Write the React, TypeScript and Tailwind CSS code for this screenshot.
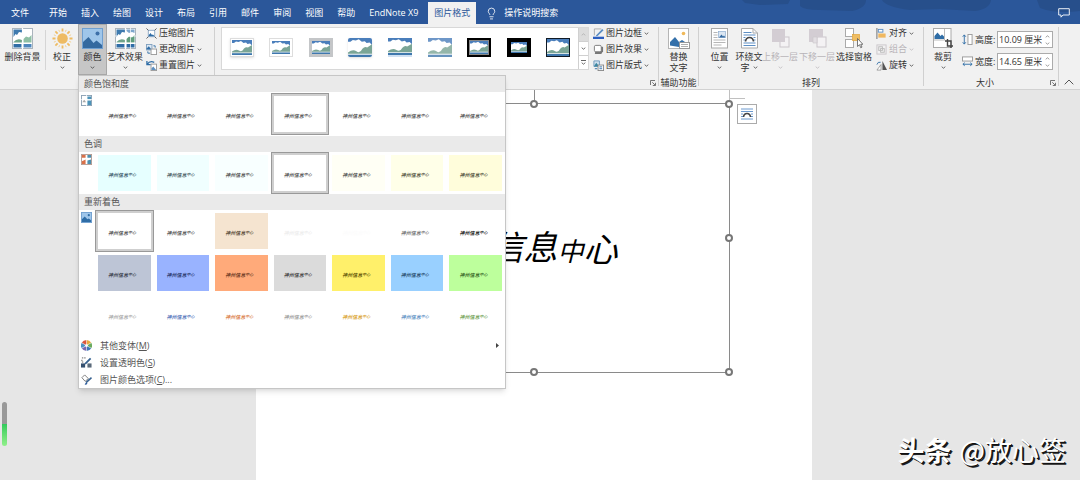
import clsx from 'clsx'
import { Lightbulb } from 'lucide-react'
import type { ReactNode } from 'react'

const TABS = ['开始', '插入', '绘图', '设计', '布局', '引用', '邮件', '审阅', '视图', '帮助', 'EndNote X9']

interface Swatch {
  bg: string
  ink: string
  selected?: boolean
}

const SATURATION: Swatch[] = [
  { bg: 'bg-white', ink: 'text-[#444444]' },
  { bg: 'bg-white', ink: 'text-[#444444]' },
  { bg: 'bg-white', ink: 'text-[#444444]' },
  { bg: 'bg-white', ink: 'text-[#444444]', selected: true },
  { bg: 'bg-white', ink: 'text-[#444444]' },
  { bg: 'bg-white', ink: 'text-[#444444]' },
  { bg: 'bg-white', ink: 'text-[#444444]' }
]

const TONE: Swatch[] = [
  { bg: 'bg-[#e6ffff]', ink: 'text-[#2f4f5f]' },
  { bg: 'bg-[#f0ffff]', ink: 'text-[#3a4f56]' },
  { bg: 'bg-[#f8ffff]', ink: 'text-[#444444]' },
  { bg: 'bg-white', ink: 'text-[#444444]', selected: true },
  { bg: 'bg-[#fffff5]', ink: 'text-[#444444]' },
  { bg: 'bg-[#ffffe8]', ink: 'text-[#44442f]' },
  { bg: 'bg-[#fffddb]', ink: 'text-[#44442f]' }
]

const RECOLOR: Swatch[] = [
  { bg: 'bg-white', ink: 'text-[#444444]', selected: true },
  { bg: 'bg-white', ink: 'text-[#444444]' },
  { bg: 'bg-[#f5e4d0]', ink: 'text-[#4a3a2a]' },
  { bg: 'bg-white', ink: 'text-[#ececec]' },
  { bg: 'bg-white', ink: 'text-[#fcfcfc]' },
  { bg: 'bg-white', ink: 'text-[#666666]' },
  { bg: 'bg-white', ink: 'text-black font-bold' },
  { bg: 'bg-[#bdc5d6]', ink: 'text-[#2c3240]' },
  { bg: 'bg-[#99b3ff]', ink: 'text-[#1c2c60]' },
  { bg: 'bg-[#ffaa7a]', ink: 'text-[#60301a]' },
  { bg: 'bg-[#dbdbdb]', ink: 'text-[#333333]' },
  { bg: 'bg-[#fff06a]', ink: 'text-[#564a00]' },
  { bg: 'bg-[#99d0ff]', ink: 'text-[#1a4060]' },
  { bg: 'bg-[#bdff9c]', ink: 'text-[#2d5a1a]' },
  { bg: 'bg-white', ink: 'text-[#a5a5a5]' },
  { bg: 'bg-white', ink: 'text-[#4568b5]' },
  { bg: 'bg-white', ink: 'text-[#d87338]' },
  { bg: 'bg-white', ink: 'text-[#959595]' },
  { bg: 'bg-white', ink: 'text-[#d89c20]' },
  { bg: 'bg-white', ink: 'text-[#4f88c0]' },
  { bg: 'bg-white', ink: 'text-[#689a48]' }
]

const Chevron = ({ className }: { className?: string }) => (
  <svg viewBox="0 0 5 3" className={clsx('h-[3px] w-[5px] shrink-0', className)}>
    <path d="M.7 .7 2.5 2.200 4.300 .7" fill="none" stroke="currentColor" strokeWidth=".7" />
  </svg>
)

const Launcher = () => (
  <button type="button" aria-label="更多选项" className="absolute right-[2px] bottom-[3px] text-[#666666]">
    <svg viewBox="0 0 6 6" className="size-[6px]" fill="none" stroke="currentColor" strokeWidth=".9">
      <path d="M.5 5V.5H5M2.3 2.3l3 3M5.5 2.8v2.7H2.8" />
    </svg>
  </button>
)

const Scene = ({ className }: { className?: string }) => (
  <svg viewBox="0 0 20 15" preserveAspectRatio="none" className={className}>
    <rect width="20" height="15" fill="#fff" />
    <path d="M0 0H20V5.500L18 3.500 15.500 4 14 2.500 11.500 3 9 1 6.500 2 4 1.500 2 3 0 3Z" fill="#4a7ebb" />
    <path d="M0 11.500Q4 8.500 7 10.500T12 8.500Q14 6.500 16 7.500L20 5V12.500H0Z" fill="#7aa596" />
    <rect y="13.200" width="20" height="1.800" fill="#3f78ad" />
  </svg>
)

const PhotoIcon = () => (
  <svg viewBox="0 0 21 21" className="size-[21px]">
    <rect x=".5" y=".5" width="20" height="20" fill="#9fc6ea" stroke="#6f9fd0" />
    <path d="M1 20V14L6.500 9l5 6 3-2.500 5.500 4.500v3Z" fill="#34699f" />
    <circle cx="15.500" cy="5.500" r="2" fill="#3d6fa8" />
  </svg>
)

const SplitIcon = ({ art }: { art?: boolean }) => (
  <svg viewBox="0 0 21 21" className="size-[21px]">
    <rect x=".5" y=".5" width="20" height="20" fill="#fff" stroke="#aab4bd" />
    <path d="M1.500 1.500H10V4.500L7 4 5 7 3.500 6 1.500 9Z" fill="#3f7aae" />
    <path d="M1.500 14Q5 10 10 12V14.500H1.500Z" fill="#6fa58b" />
    <path d="M1.500 16H9.500V19.500H1.500Z" fill="#2f6da6" />
    <path d="M11.500 11 14 8.500 17 9.500 19.500 7V14.500H11.500Z" fill={art ? '#5f9d7c' : '#8fc0a5'} />
    <path d="M11.500 16H19.500V19.500H11.500Z" fill={art ? '#2f6da6' : '#4d86bd'} />
    {art && <path d="M11.500 1.500H19.500V5L17 4 14 5 11.500 3Z" fill="#7da6cc" />}
    <path d="M10.500 0V21" stroke="#fff" strokeWidth="1.200" />
    {art && <path d="M0 8H21M0 15.200H21M15.500 0V21" stroke="#fff" strokeWidth=".7" />}
  </svg>
)

const SunIcon = () => (
  <svg viewBox="0 0 21 21" className="size-[21px]">
    <circle cx="10.500" cy="10.500" r="5.300" fill="#eebb63" />
    <path
      d="M10.500 .5v3M10.500 17.500v3M.5 10.500h3M17.500 10.500h3M3.400 3.400l2.200 2.200M15.400 15.400l2.200 2.200M3.400 17.600l2.200-2.200M15.400 5.600l2.200-2.200"
      stroke="#eebb63"
      strokeWidth="1.800"
    />
    <path
      d="M6.800 1.900l.8 1.800M13.400 17.300l.8 1.800M1.900 14.200l1.800-.8M17.300 7.600l1.800-.8M1.900 6.800l1.800.8M17.300 13.400l1.800.8M6.800 19.100l.8-1.800M13.400 3.700l.8-1.800"
      stroke="#f3d08f"
    />
  </svg>
)

const AltTextIcon = () => (
  <svg viewBox="0 0 22 22" className="size-[22px]">
    <rect x=".5" y=".5" width="20" height="20" fill="#fff" stroke="#b5b5b5" />
    <circle cx="15.500" cy="5.500" r="1.800" fill="#f0b95a" />
    <path d="M2 17.500V14L7 9l4 5 3-2 3 2H11v5Z" fill="#3470aa" />
    <rect x="11.500" y="14.500" width="10" height="6" fill="#fff" stroke="#999" />
    <path d="M13 16.500h7M13 18.500h7" stroke="#9a9a9a" strokeWidth=".8" />
  </svg>
)

const PositionIcon = () => (
  <svg viewBox="0 0 17 21" className="h-[21px] w-[17px]">
    <rect x=".5" y=".5" width="16" height="19.500" fill="#fff" stroke="#a9a9a9" />
    <path d="M2.500 4.500h4M2.500 7h4M2.500 9.500h4M2.500 12h12M2.500 14.500h12M2.500 17h8" stroke="#a5a5a5" strokeWidth=".8" />
    <rect x="7.500" y="3.500" width="7" height="6" fill="#dbe6f2" stroke="#8faed0" strokeWidth=".7" />
    <path d="M8 9.500l2.500-3 1.500 2 1-1 1.500 2Z" fill="#34699f" />
  </svg>
)

const WrapIcon = () => (
  <svg viewBox="0 0 17 21" className="h-[21px] w-[17px]">
    <path d="M.5 .5H12L16.500 5V20H.5Z" fill="#fff" stroke="#a9a9a9" />
    <path d="M12 .5V5h4.500" fill="none" stroke="#a9a9a9" />
    <path d="M2.500 4.500h8M2.500 7h12M2.500 9.500h2M12.500 9.500h2M2.500 12h1.500M13 12h1.500M2.500 15h12M2.500 17.500h12" stroke="#4b82bd" strokeWidth=".9" />
    <path d="M4.500 13.500Q5 9.500 8.500 9.500T12.500 13.500" fill="none" stroke="#444" strokeWidth="1.700" />
  </svg>
)

const LayerIcon = ({ back }: { back?: boolean }) => (
  <svg viewBox="0 0 19 21" className="h-[21px] w-[19px]">
    <rect x="9" y="9" width="9" height="10" fill="#f4f2f4" stroke="#cbc6cb" />
    <path d={back ? 'M1 1H15V9H9V14H1Z' : 'M1 1H14V14H1Z'} fill="#d3cdd3" />
    {back && <path d="M5 9h4v6H5Z" fill="#e3dfe3" stroke="#cbc6cb" strokeWidth=".6" />}
  </svg>
)

const SelectionPaneIcon = () => (
  <svg viewBox="0 0 18 21" className="h-[21px] w-[18px]">
    <rect x=".5" y=".5" width="8" height="8" fill="#fff" stroke="#aaa" />
    <rect x=".5" y="11.500" width="8" height="8" fill="#fff" stroke="#aaa" />
    <rect x="7.500" y="6.500" width="7" height="6" fill="#efbd62" stroke="#e2a53d" strokeWidth=".7" />
    <path d="M12.500 10.500v8l2-1.800 1.200 3 1.300-.6-1.300-2.800h2.200Z" fill="#fff" stroke="#555" strokeWidth=".8" />
  </svg>
)

const CropIcon = () => (
  <svg viewBox="0 0 20 21" className="h-[21px] w-[20px]">
    <rect x=".5" y=".5" width="17.500" height="19" fill="#fff" stroke="#aaa" />
    <path d="M11.500 .5V12M.5 12H12" stroke="#aaa" strokeWidth=".8" />
    <path d="M1.500 11V8L4.500 4.500l3 3.500 1.500-1.500 2 2V11Z" fill="#2f6da6" />
    <path d="M14.500 11v7H20M12 13h6v7" fill="none" stroke="#444" strokeWidth="1.400" />
  </svg>
)

const SMALL_ICONS: Record<string, ReactNode> = {
  compress: (
    <>
      <rect x="2.500" y="2.500" width="7" height="7" fill="#fff" stroke="#8aa8c6" />
      <path d="M3 9V7.500L5 5.500l1.500 2L7.500 7 9 8.500V9Z" fill="#2f6da6" />
      <path d="M.5 .5l2 2M11.500 .5l-2 2M.5 11.500l2-2M11.500 11.500l-2-2" stroke="#555" />
    </>
  ),
  change: (
    <>
      <rect x=".5" y=".5" width="6" height="6" fill="#dce8f3" stroke="#7f9fbe" />
      <path d="M1 6V4.500L3 2.500 6 6Z" fill="#2f6da6" />
      <rect x="5.500" y="5.500" width="6" height="6" fill="#fff" stroke="#999" />
      <path d="M2 8v2h2.500M8 2h2v2" fill="none" stroke="#2f6da6" />
    </>
  ),
  reset: (
    <>
      <rect x="5.500" y="4.500" width="6" height="7" fill="#fff" stroke="#999" />
      <path d="M6 11V9l2-2 3 4Z" fill="#5d8fc0" />
      <path d="M1 1v4h4M1.500 4.500Q4 .5 9 2.500" fill="none" stroke="#2f6da6" strokeWidth="1.400" />
    </>
  ),
  border: (
    <>
      <path d="M9 1H1.500V8" fill="none" stroke="#aaa" />
      <path d="M3.500 8 10 1l1.500 1.500L5 8.800 3 9Z" fill="#5a8dc2" />
      <rect y="9.500" width="12" height="2.500" fill="#2c5fc0" />
    </>
  ),
  effect: (
    <>
      <path d="M3 4 11 3v5L9 11H2Z" fill="#777" />
      <rect x="1.500" y="1.500" width="7.500" height="7" rx="1.500" fill="#fff" stroke="#777" />
    </>
  ),
  layout: (
    <>
      <path d="M1 1h6v6H1Z" fill="#cfe0ee" stroke="#6f98bd" />
      <path d="M1 7l2.500-4L7 7Z" fill="#3a86a0" />
      <rect x="5.500" y="5.500" width="6" height="6" fill="#fff" stroke="#888" />
      <path d="M7 7.500h3M7 9.500h3M2 9.500h2.500" stroke="#2f6da6" />
    </>
  ),
  align: (
    <>
      <path d="M1 0v12" stroke="#666" />
      <rect x="2.500" y="1.500" width="5" height="3" fill="#fff" stroke="#5a8dc2" />
      <rect x="2.500" y="6" width="8" height="4.500" fill="#efb860" />
    </>
  ),
  group: (
    <>
      <rect x="1" y="1" width="10" height="10" fill="none" stroke="#c9c5c9" />
      <rect x="3" y="3" width="4" height="4" fill="none" stroke="#bbb" />
      <rect x="5" y="5" width="4" height="4" fill="none" stroke="#bbb" />
    </>
  ),
  rotate: (
    <>
      <path d="M7 1v10h5Z" fill="#555" />
      <path d="M5.500 5v6H1Z" fill="#fff" stroke="#888" strokeWidth=".8" />
      <path d="M1 5Q2 1.500 5 2.500" fill="none" stroke="#2f6da6" />
    </>
  ),
  height: (
    <>
      <path d="M2.500 1v10M.8 3l1.700-2 1.700 2M.8 9l1.700 2 1.700-2" fill="none" stroke="#2f6da6" />
      <rect x="6.500" y=".5" width="4.500" height="11" fill="#fff" stroke="#999" />
    </>
  ),
  width: (
    <>
      <rect x=".5" y="1" width="11" height="4.500" fill="#fff" stroke="#999" />
      <path d="M1 9h10M3 7.300 1 9l2 1.700M9 7.300 11 9 9 10.700" fill="none" stroke="#2f6da6" />
    </>
  ),
  saturation: (
    <>
      <rect x=".5" y=".5" width="11" height="11" fill="#fff" stroke="#8aa0b3" />
      <path d="M1.500 8l2-3 2 3Z" fill="#aaa" />
      <path d="M7 1.500h4v3H7ZM7 6h4v5H7Z" fill="#4c93b8" />
      <path d="M6 0v12M0 5h12" stroke="#fff" strokeWidth=".8" />
    </>
  ),
  tone: (
    <>
      <rect x=".5" y=".5" width="11" height="11" fill="#fff" stroke="#b59a90" />
      <path d="M1 1h4v3H1ZM1 8l4-2v5H1Z" fill="#d9714a" />
      <path d="M7 1h4v3H7ZM7 7l4-1v5H7Z" fill="#4c8fae" />
    </>
  ),
  recolor: (
    <>
      <rect x=".5" y=".5" width="11" height="11" fill="#9fc6ea" stroke="#6f9fd0" />
      <path d="M1 11V8l3-3 3 3 1.500-1L11 9v2Z" fill="#2f6da6" />
      <circle cx="8.500" cy="3.500" r="1.200" fill="#2f6da6" />
    </>
  ),
  variants: (
    <>
      <path d="M6 6V0A6 6 0 0 1 11.200 3Z" fill="#e9a93c" />
      <path d="M6 6 11.200 3A6 6 0 0 1 11.200 9Z" fill="#6bab5c" />
      <path d="M6 6 11.200 9A6 6 0 0 1 6 12Z" fill="#3c78b8" />
      <path d="M6 6V12A6 6 0 0 1 .8 9Z" fill="#7b68b0" />
      <path d="M6 6 .8 9A6 6 0 0 1 .8 3Z" fill="#4a90c4" />
      <path d="M6 6 .8 3A6 6 0 0 1 6 0Z" fill="#d9553f" />
      <path d="M6 0V12M.8 3 11.200 9M.8 9 11.200 3" stroke="#fff" strokeWidth=".5" />
      <circle cx="6" cy="6" r="1.500" fill="#fff" />
    </>
  ),
  transparent: (
    <>
      <path d="M1 1h4M1 3v2.500h2" fill="none" stroke="#555" strokeDasharray="1.500 1" />
      <path d="M4.500 7.500 10.500 1.500" stroke="#35608f" strokeWidth="2" />
      <rect x="0" y="7" width="4.500" height="4.500" fill="#35506f" />
      <rect x="7" y="7" width="4.500" height="4.500" fill="#5a6a7a" />
    </>
  ),
  options: (
    <>
      <path d="M1 4l3-3 4 4-3.500 3Z" fill="#fff" stroke="#777" />
      <path d="M5.500 9.500 11.500 4" stroke="#35608f" strokeWidth="1.800" />
      <path d="M4 11.500q1-3 3-1.500 0 2-3 1.500Z" fill="#2f5f9f" />
    </>
  )
}

const SmallIcon = ({ name }: { name: string }) => (
  <svg viewBox="0 0 12 12" className="size-[11px] shrink-0">
    {SMALL_ICONS[name]}
  </svg>
)

interface BigButtonProps {
  icon: ReactNode
  label: string
  width: string
  second?: string
  arrow?: boolean
  disabled?: boolean
  active?: boolean
}

const BigButton = ({ icon, label, width, second, arrow, disabled, active }: BigButtonProps) => (
  <button
    type="button"
    disabled={disabled}
    className={clsx(
      'flex h-[51px] shrink-0 flex-col items-center pt-1 whitespace-nowrap',
      width,
      disabled && 'text-[#b8b4b8]',
      active && 'bg-[#c6c6c6] outline outline-1 -outline-offset-1 outline-[#a8a8a8]'
    )}
  >
    <span className="flex h-[23px] items-start justify-center">{icon}</span>
    <span className="leading-[11px]">{label}</span>
    <span className="flex h-[11px] items-center gap-[3px] leading-[11px]">
      {second}
      {arrow && <Chevron />}
    </span>
  </button>
)

interface SmallButtonProps {
  icon: string
  label: string
  arrow?: boolean
  disabled?: boolean
}

const SmallButton = ({ icon, label, arrow, disabled }: SmallButtonProps) => (
  <button
    type="button"
    disabled={disabled}
    className={clsx('flex h-4 items-center gap-[2px] whitespace-nowrap', disabled && 'text-[#b8b4b8]')}
  >
    <SmallIcon name={icon} />
    <span>{label}</span>
    {arrow && <Chevron />}
  </button>
)

interface GroupProps {
  label?: string
  launcher?: boolean
  className?: string
  children: ReactNode
}

const Group = ({ label, launcher, className, children }: GroupProps) => (
  <div className="relative flex shrink-0 flex-col">
    <div className={clsx('flex h-[52px]', className)}>{children}</div>
    <div className={clsx('flex h-[13px] items-center justify-center', launcher && 'pr-3')}>{label}</div>
    {launcher && <Launcher />}
  </div>
)

const Divider = () => <div className="my-[3px] w-px shrink-0 bg-[#d0d0d0]" />

const SizeField = ({ id, icon, label, value }: { id: string; icon: string; label: string; value: string }) => (
  <div className="flex items-center">
    <SmallIcon name={icon} />
    <label htmlFor={id} className="w-[24px] pl-[2px] whitespace-nowrap">
      {label}
    </label>
    <div className="flex h-[17px] w-[56px] items-center border border-[#ababab] bg-white">
      <input id={id} defaultValue={value} className="w-full min-w-0 pl-[1px] text-[9px] text-[#333333] outline-none" />
      <div className="flex w-[10px] shrink-0 flex-col items-center gap-1 text-[#777777]">
        <button type="button" aria-label={`增加${label}`} className="flex">
          <Chevron className="rotate-180" />
        </button>
        <button type="button" aria-label={`减少${label}`} className="flex">
          <Chevron />
        </button>
      </div>
    </div>
  </div>
)

const GALLERY = [
  'border border-[#dddddd] bg-white p-px shadow-sm',
  'border border-[#dddddd] bg-white p-[2px]',
  'bg-[#c4c6c8] p-[3px]',
  'overflow-hidden rounded-[2px] shadow',
  'border-b-2 border-[#cfe0f2]',
  'opacity-80',
  'border-2 border-black bg-[#888888] p-px',
  'border-4 border-black',
  'border border-[#101a26]'
]

const Section = ({ title, icon, swatches, className }: { title: string; icon: string; swatches: Swatch[]; className?: string }) => (
  <section>
    <h3 className="h-4 bg-[#eaeaea] pl-[5px] leading-4">{title}</h3>
    <div className={clsx('flex', className)}>
      <div className="w-[16px] shrink-0 pt-[2px] pl-[2px]">
        <SmallIcon name={icon} />
      </div>
      <div className="grid flex-1 grid-cols-7">
        {swatches.map((swatch, i) => (
          <button
            key={i}
            type="button"
            aria-label={`${title} ${i + 1}`}
            className={clsx(
              'h-[42px]',
              swatch.selected ? 'border border-[#999999] bg-[#cfcfcf] p-[2px]' : 'p-[3px]'
            )}
          >
            <span
              className={clsx(
                'flex h-full items-center pt-[3px] pl-[10px] font-medium whitespace-nowrap italic',
                swatch.bg,
                swatch.ink
              )}
            >
              <span className="text-[5px]">神州信息</span>
              <span className="text-[4px]">中心</span>
            </span>
          </button>
        ))}
      </div>
    </div>
  </section>
)

const MenuItem = ({ icon, label, hotkey, more, submenu }: { icon: string; label: string; hotkey: string; more?: boolean; submenu?: boolean }) => (
  <button type="button" className="flex h-[17px] w-full items-center pr-[6px] pl-[2px] text-left">
    <SmallIcon name={icon} />
    <span className="ml-[8px] flex-1">
      {label}(<u>{hotkey}</u>){more && '...'}
    </span>
    {submenu && (
      <svg viewBox="0 0 3 5" className="h-[5px] w-[3px]">
        <path d="M0 0 3 2.500 0 5Z" fill="#444" />
      </svg>
    )}
  </button>
)

const ColorMenu = () => (
  <div className="absolute top-[51px] left-0 z-10 w-[428px] border border-[#c6c6c6] bg-white text-[#555555] shadow-md">
    <Section title="颜色饱和度" icon="saturation" swatches={SATURATION} className="py-px" />
    <Section title="色调" icon="tone" swatches={TONE} />
    <Section title="重新着色" icon="recolor" swatches={RECOLOR} className="pb-px" />
    <MenuItem icon="variants" label="其他变体" hotkey="M" submenu />
    <MenuItem icon="transparent" label="设置透明色" hotkey="S" />
    <MenuItem icon="options" label="图片颜色选项" hotkey="C" more />
  </div>
)

const TitleBar = () => (
  <header className="relative flex h-6 shrink-0 items-stretch bg-[#2b579a] text-white">
    <svg viewBox="0 0 340 24" className="absolute top-0 right-0 h-6 w-[340px]" fill="#274f8b">
      <path d="M2 0H50L48 4 20 5 5 3Z" />
      <path d="M60 0H126Q126 8 112 11L80 10Q64 10 60 6Z" />
      <path d="M142 0H251Q250 9 235 11L200 9 170 10Q146 7 142 0Z" />
      <path d="M297 0H340V11Q315 14 300 8Z" />
    </svg>
    <nav className="flex items-stretch">
      <button type="button" className="mr-[2px] px-[11px] pt-[2px]">
        文件
      </button>
      {TABS.map((tab) => (
        <button key={tab} type="button" className="px-[7px] pt-[2px] whitespace-nowrap">
          {tab}
        </button>
      ))}
      <button type="button" className="mt-[2px] ml-[3px] bg-[#f1f1f1] px-[6px] whitespace-nowrap text-[#2b579a]">
        图片格式
      </button>
    </nav>
    <button type="button" className="ml-[9px] flex items-center gap-[6px] pt-[2px] whitespace-nowrap">
      <Lightbulb size={13} strokeWidth={1.5} />
      操作说明搜索
    </button>
    <button type="button" aria-label="批注" className="relative mr-[10px] ml-auto pt-[2px]">
      <svg viewBox="0 0 12 10" className="h-[10px] w-[12px]" fill="none" stroke="#fff" strokeWidth=".9">
        <path d="M.7 .7H11.300V7H5L3 9.200V7H.7Z" />
      </svg>
    </button>
  </header>
)

const Ribbon = () => (
  <div className="relative z-10 flex h-[66px] shrink-0 border-b border-[#d2d2d2] bg-[#f1f1f1] text-[#333333]">
    <Group>
      <BigButton icon={<SplitIcon />} label="删除背景" width="w-[45px]" />
      <div className="my-[6px] w-px bg-[#d5d5d5]" />
      <BigButton icon={<SunIcon />} label="校正" width="w-[32px]" arrow />
      <div className="relative">
        <BigButton icon={<PhotoIcon />} label="颜色" width="w-[29px]" arrow active />
        <ColorMenu />
      </div>
      <BigButton icon={<SplitIcon art />} label="艺术效果" width="w-[36px]" arrow />
      <div className="flex w-[71px] flex-col pt-[1px] pl-[3px]">
        <SmallButton icon="compress" label="压缩图片" />
        <SmallButton icon="change" label="更改图片" arrow />
        <SmallButton icon="reset" label="重置图片" arrow />
      </div>
    </Group>
    <Divider />
    <Group launcher className="pl-[6px]">
      <div className="mt-[3px] flex h-[43px] border border-[#d8d8d8] bg-white">
        <div className="grid w-[356px] grid-cols-9 items-center justify-items-center pb-[3px]">
          {GALLERY.map((frame, i) => (
            <button key={i} type="button" aria-label={`图片样式 ${i + 1}`} className={clsx('h-[19px] w-6', frame)}>
              <Scene className="size-full" />
            </button>
          ))}
        </div>
        <div className="flex w-[10px] flex-col divide-y divide-[#d0d0d0] border-l border-[#d0d0d0]">
          <button type="button" aria-label="上一行" disabled className="flex flex-1 items-center justify-center bg-[#dcdcdc] text-[#aaaaaa]">
            <Chevron className="rotate-180" />
          </button>
          <button type="button" aria-label="下一行" className="flex flex-1 items-center justify-center">
            <Chevron />
          </button>
          <button type="button" aria-label="其他" className="flex flex-1 flex-col items-center justify-center gap-px">
            <span className="h-px w-[5px] bg-[#666666]" />
            <Chevron />
          </button>
        </div>
      </div>
      <div className="flex w-[69px] flex-col pt-[1px] pl-[4px]">
        <SmallButton icon="border" label="图片边框" arrow />
        <SmallButton icon="effect" label="图片效果" arrow />
        <SmallButton icon="layout" label="图片版式" arrow />
      </div>
    </Group>
    <Divider />
    <Group label="辅助功能">
      <BigButton icon={<AltTextIcon />} label="替换" second="文字" width="w-[39px]" />
    </Group>
    <Divider />
    <Group label="排列" className="pl-[3px]">
      <BigButton icon={<PositionIcon />} label="位置" width="w-[35px]" arrow />
      <BigButton icon={<WrapIcon />} label="环绕文" second="字" width="w-[24px]" arrow />
      <BigButton icon={<LayerIcon />} label="上移一层" width="w-[38px]" arrow disabled />
      <BigButton icon={<LayerIcon back />} label="下移一层" width="w-[36px]" arrow disabled />
      <BigButton icon={<SelectionPaneIcon />} label="选择窗格" width="w-[38px]" />
      <div className="flex w-[50px] flex-col pt-[1px] pl-[3px]">
        <SmallButton icon="align" label="对齐" arrow />
        <SmallButton icon="group" label="组合" arrow disabled />
        <SmallButton icon="rotate" label="旋转" arrow />
      </div>
    </Group>
    <Divider />
    <Group label="大小" launcher>
      <BigButton icon={<CropIcon />} label="裁剪" width="w-[38px]" arrow />
      <div className="flex flex-col gap-[5px] pt-[7px] pr-[5px]">
        <SizeField id="pic-height" icon="height" label="高度:" value="10.09 厘米" />
        <SizeField id="pic-width" icon="width" label="宽度:" value="14.65 厘米" />
      </div>
    </Group>
    <Divider />
    <button type="button" aria-label="折叠功能区" className="mr-[6px] mb-[4px] ml-auto self-end">
      <svg viewBox="0 0 10 6" className="h-[6px] w-[10px]" fill="none" stroke="#555">
        <path d="M.7 5.300 5 1l4.300 4.300" />
      </svg>
    </button>
  </div>
)

const HANDLES = [
  'left-1/2 top-0',
  'left-full top-0',
  'left-full top-1/2',
  'left-1/2 top-full',
  'left-full top-full',
  'left-0 top-0',
  'left-0 top-1/2',
  'left-0 top-full'
]

const SelectedPicture = () => (
  <div className="relative mt-[13px] h-[270px] w-[391px] border border-[#8a8a8a]">
    <div className="flex h-full items-center justify-end pt-[18px] pr-[111px] text-black">
      <div className="flex items-end italic">
        <span className="text-[34px] leading-[44px]">信息</span>
        <span className="text-[26px] leading-[36px]">中</span>
        <span className="text-[34px] leading-[40px]">心</span>
      </div>
    </div>
    <span className="absolute -top-[14px] left-1/2 h-[14px] w-px bg-[#8a8a8a]" />
    <span className="absolute -top-[14px] left-full h-[14px] w-px bg-[#c0c0c0]" />
    <span className="absolute -top-[6px] left-full h-px w-4 bg-[#c0c0c0]" />
    {HANDLES.map((place) => (
      <span
        key={place}
        className={clsx('absolute size-2 -translate-1/2 rounded-full border-2 border-[#777777] bg-white', place)}
      />
    ))}
    <button
      type="button"
      aria-label="布局选项"
      className="absolute top-0 left-full ml-2 flex size-5 items-center justify-center border border-[#ababab] bg-white"
    >
      <svg viewBox="0 0 12 12" className="size-3" fill="none">
        <path d="M0 1h12M0 3.500h12M0 6h2M10 6h2M0 8.500h2M10 8.500h2M0 11h12" stroke="#5b8fc9" strokeWidth=".9" />
        <path d="M2.500 9Q3 5.500 6 5.500T9.500 9" stroke="#444" strokeWidth="1.600" />
      </svg>
    </button>
  </div>
)

export default function App() {
  return (
    <div className="flex h-screen flex-col overflow-hidden bg-[#e6e6e6] font-['Open_Sans','Noto_Sans_CJK_SC',sans-serif] text-[9px] leading-[12px]">
      <TitleBar />
      <Ribbon />
      <main className="relative flex flex-1 justify-center pr-3">
        <div className="flex w-[556px] justify-center bg-white">
          <SelectedPicture />
        </div>
        <div className="absolute bottom-[34px] left-[2px] h-[44px] w-[5px] rounded-full bg-linear-to-b from-[#999999] from-50% via-[#2fcb5c] via-50% to-[#8ff08a]" />
        <div className="absolute right-[14px] bottom-[10px] flex items-center gap-[8px] font-['Noto_Sans_CJK_SC',sans-serif] text-[27px] leading-[40px] text-white [text-shadow:1px_1px_0_#111,2px_2px_0_#222]">
          <span className="font-bold">头条</span>
          <span>@放心签</span>
        </div>
      </main>
    </div>
  )
}
